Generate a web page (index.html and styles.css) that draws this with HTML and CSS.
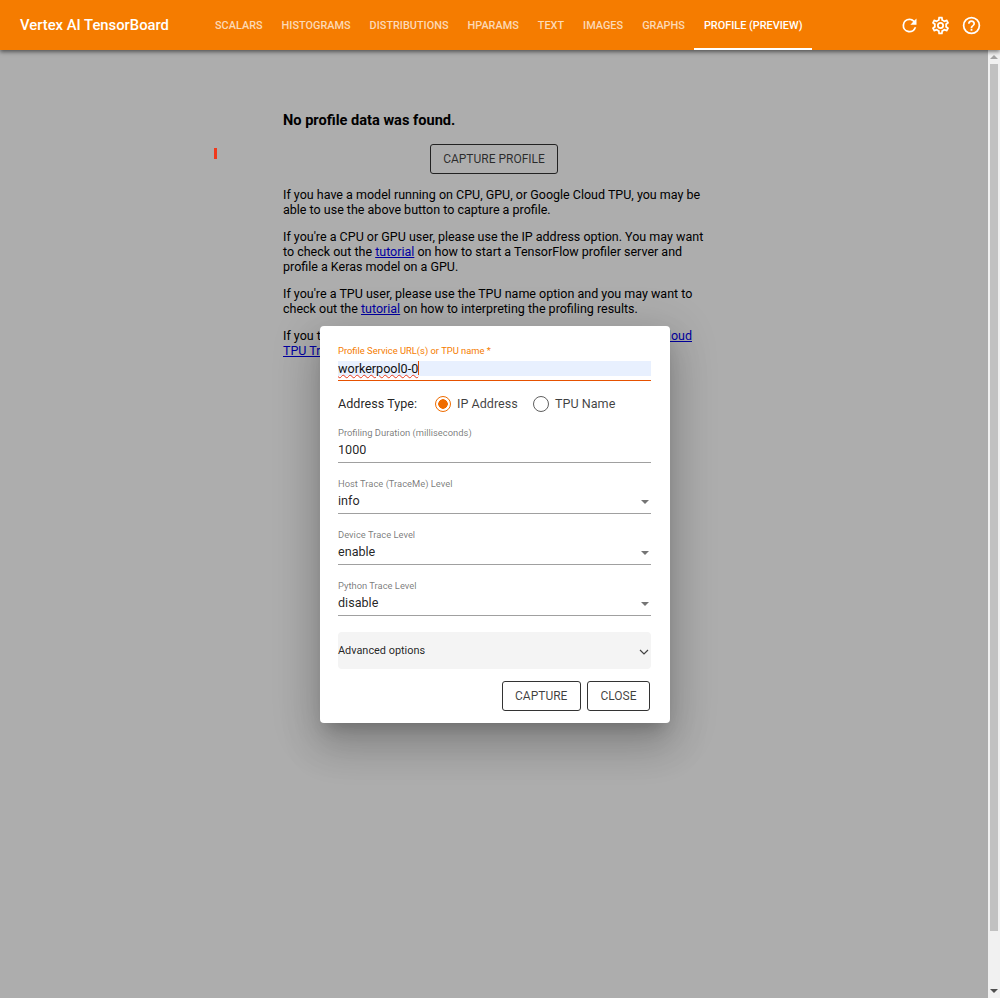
FILE: index.html
```html
<!DOCTYPE html>
<html lang="en">
<head>
  <meta charset="UTF-8" />
  <title>Vertex AI TensorBoard</title>
  <link rel="stylesheet" href="styles.css">
</head>
<body>

  <header class="toolbar">
    <div class="brand">Vertex AI TensorBoard</div>
    <nav class="tabs">
      <a class="tab">Scalars</a>
      <a class="tab">Histograms</a>
      <a class="tab">Distributions</a>
      <a class="tab">Hparams</a>
      <a class="tab">Text</a>
      <a class="tab">Images</a>
      <a class="tab">Graphs</a>
      <a class="tab active">Profile (Preview)</a>
    </nav>
    <div class="toolbar-icons">
      <svg class="icon" viewBox="0 0 24 24"><path d="M17.65 6.35A7.96 7.96 0 0 0 12 4a8 8 0 1 0 7.73 10h-2.08A6 6 0 1 1 12 6c1.66 0 3.14.69 4.22 1.78L13 11h7V4l-2.35 2.35z"/></svg>
      <svg class="icon" viewBox="0 0 24 24"><path d="M19.43 12.98c.04-.32.07-.64.07-.98s-.03-.66-.07-.98l2.11-1.65a.5.5 0 0 0 .12-.64l-2-3.46a.5.5 0 0 0-.61-.22l-2.49 1a7.3 7.3 0 0 0-1.69-.98l-.38-2.65A.49.49 0 0 0 14 2h-4a.49.49 0 0 0-.49.42l-.38 2.65c-.61.25-1.17.59-1.69.98l-2.49-1a.5.5 0 0 0-.61.22l-2 3.46a.49.49 0 0 0 .12.64l2.11 1.65c-.04.32-.07.65-.07.98s.03.66.07.98l-2.11 1.65a.5.5 0 0 0-.12.64l2 3.46c.12.22.39.3.61.22l2.49-1c.52.4 1.08.73 1.69.98l.38 2.65c.03.24.24.42.49.42h4c.25 0 .46-.18.49-.42l.38-2.65c.61-.25 1.17-.59 1.69-.98l2.49 1c.23.09.49 0 .61-.22l2-3.46a.5.5 0 0 0-.12-.64l-2.11-1.65zm-1.98-1.71c.04.31.05.52.05.73s-.02.43-.05.73l-.14 1.13.89.7 1.08.84-.7 1.21-1.27-.51-1.04-.42-.9.68c-.43.32-.84.56-1.25.73l-1.06.43-.16 1.13-.2 1.35h-1.4l-.19-1.35-.16-1.13-1.06-.43c-.43-.18-.83-.41-1.23-.71l-.91-.7-1.06.43-1.27.51-.7-1.21 1.08-.84.89-.7-.14-1.13c-.03-.31-.05-.54-.05-.74s.02-.43.05-.73l.14-1.13-.89-.7-1.08-.84.7-1.21 1.27.51 1.04.42.9-.68c.43-.32.84-.56 1.25-.73l1.06-.43.16-1.13.2-1.35h1.39l.19 1.35.16 1.13 1.06.43c.43.18.83.41 1.23.71l.91.7 1.06-.43 1.27-.51.7 1.21-1.07.85-.89.7.14 1.13zM12 8a4 4 0 1 0 0 8 4 4 0 0 0 0-8zm0 6a2 2 0 1 1 0-4 2 2 0 0 1 0 4z"/></svg>
      <svg class="icon" viewBox="0 0 24 24"><path d="M11 18h2v-2h-2v2zm1-16a10 10 0 1 0 0 20 10 10 0 0 0 0-20zm0 18a8 8 0 1 1 0-16 8 8 0 0 1 0 16zm0-14a4 4 0 0 0-4 4h2c0-1.1.9-2 2-2s2 .9 2 2c0 2-3 1.75-3 5h2c0-2.25 3-2.5 3-5a4 4 0 0 0-4-4z"/></svg>
    </div>
  </header>

  <div class="page">
    <main class="content">
      <div class="empty">
        <h3>No profile data was found.</h3>
        <div class="capture-row"><button class="outline-btn">Capture Profile</button></div>
        <p>If you have a model running on CPU, GPU, or Google Cloud TPU, you may be able to use the above button to capture a profile.</p>
        <p>If you're a CPU or GPU user, please use the IP address option. You may want to check out the <a href="#">tutorial</a> on how to start a TensorFlow profiler server and profile a Keras model on a GPU.</p>
        <p>If you're a TPU user, please use the TPU name option and you may want to check out the <a href="#">tutorial</a> on how to interpreting the profiling results.</p>
        <p>If you think profiling is done properly, please see the page of <a href="#">Google Cloud TPU Troubleshooting and FAQ</a> and consider filing an issue on GitHub.</p>
      </div>
      <div class="backdrop"></div>
      <div class="red-mark"></div>
    </main>
    <div class="scrollbar">
      <span class="arrow up"></span>
      <div class="thumb"></div>
      <span class="arrow down"></span>
    </div>
  </div>

  <div class="dialog">
    <div class="field focused">
      <label>Profile Service URL(s) or TPU name *</label>
      <div class="value autofill"><span class="misspelled">workerpool0-0</span><span class="caret"></span></div>
    </div>

    <div class="address-row">
      <span class="address-label">Address Type:</span>
      <span class="radio checked"></span><span class="radio-text">IP Address</span>
      <span class="radio"></span><span class="radio-text">TPU Name</span>
    </div>

    <div class="field">
      <label>Profiling Duration (milliseconds)</label>
      <div class="value">1000</div>
    </div>
    <div class="field select">
      <label>Host Trace (TraceMe) Level</label>
      <div class="value">info<span class="select-arrow"></span></div>
    </div>
    <div class="field select">
      <label>Device Trace Level</label>
      <div class="value">enable<span class="select-arrow"></span></div>
    </div>
    <div class="field select">
      <label>Python Trace Level</label>
      <div class="value">disable<span class="select-arrow"></span></div>
    </div>

    <div class="advanced">
      <span>Advanced options</span>
      <svg class="chevron" viewBox="0 0 10 6"><path d="M1 1l4 4 4-4"/></svg>
    </div>

    <div class="actions">
      <button class="outline-btn">Capture</button>
      <button class="outline-btn">Close</button>
    </div>
  </div>

</body>
</html>
```

FILE: styles.css
```css
* {
  box-sizing: border-box;
  margin: 0;
  padding: 0;
}

html, body {
  height: 100%;
  overflow: hidden;
}

body {
  font-family: Roboto, sans-serif;
  background-color: white;
  color: #000;
  display: flex;
  flex-direction: column;
}

.toolbar {
  height: 50px;
  flex: none;
  display: flex;
  align-items: center;
  padding-left: 20px;
  background-color: #f57c00;
  color: white;
  box-shadow: 0 2px 4px rgba(0, 0, 0, 0.5);
  position: relative;
  z-index: 3;
}

.brand {
  font-size: 14.8px;
  font-weight: 500;
  width: 185.5px;
  flex: none;
}

.tabs {
  display: flex;
  height: 100%;
}

.tab {
  display: flex;
  align-items: center;
  padding: 2px 9.5px 0;
  font-size: 10.9px;
  font-weight: 500;
  text-transform: uppercase;
  color: rgba(255, 255, 255, 0.72);
  border-bottom: 2px solid transparent;
}

.tab.active {
  color: white;
  border-bottom-color: white;
}

.toolbar-icons {
  margin-left: auto;
  display: flex;
  gap: 10px;
  padding-right: 18px;
}

.icon {
  width: 21px;
  height: 21px;
  fill: white;
}

.page {
  flex: 1;
  display: flex;
  min-height: 0;
}

.content {
  flex: 1;
  position: relative;
  padding: 61px 0 0 283px;
}

.empty {
  width: 427px;
  font-size: 12.5px;
  line-height: 15px;
}

.empty h3 {
  font-size: 14.6px;
  line-height: 19px;
  font-weight: 700;
}

.capture-row {
  display: flex;
  justify-content: center;
  margin: 14px 0 13px;
  padding-right: 5px;
}

.empty p {
  margin-bottom: 12px;
}

.empty a {
  color: #0000ee;
}

.outline-btn {
  height: 30px;
  padding: 0 12.5px;
  font-family: Roboto, sans-serif;
  font-size: 12px;
  text-transform: uppercase;
  color: rgba(0, 0, 0, 0.75);
  background: white;
  border: 1px solid #333;
  border-radius: 3px;
}

.scrollbar {
  width: 12px;
  flex: none;
  background-color: #f1f1f1;
  display: flex;
  flex-direction: column;
  align-items: center;
  padding: 5px 2px;
}

.thumb {
  width: 100%;
  height: 867px;
  margin-top: 5px;
  background-color: #c1c1c1;
}

.arrow {
  width: 0;
  height: 0;
  border-left: 4px solid transparent;
  border-right: 4px solid transparent;
}

.arrow.up {
  border-bottom: 4px solid #a3a3a3;
}

.arrow.down {
  margin-top: auto;
  border-top: 4px solid #505050;
}

.backdrop {
  position: absolute;
  inset: 0;
  background-color: rgba(0, 0, 0, 0.32);
  pointer-events: none;
}

.red-mark {
  position: absolute;
  left: 214px;
  top: 98px;
  width: 3px;
  height: 11px;
  background-color: #f0391c;
}

.dialog {
  position: absolute;
  left: 320px;
  top: 326px;
  width: 350px;
  height: 397px;
  z-index: 4;
  padding: 17px 19px 0 18px;
  background-color: white;
  border-radius: 4px;
  box-shadow: 0 11px 15px -7px rgba(0, 0, 0, 0.2), 0 24px 38px 3px rgba(0, 0, 0, 0.14), 0 9px 46px 8px rgba(0, 0, 0, 0.12);
}

.field {
  height: 51px;
}

.field label {
  display: block;
  height: 15px;
  font-size: 9.4px;
  line-height: 15px;
  color: rgba(0, 0, 0, 0.54);
}

.value {
  position: relative;
  height: 20px;
  font-size: 12.6px;
  line-height: 20px;
  border-bottom: 1px solid #a0a0a0;
  box-sizing: content-box;
  padding-bottom: 2px;
  color: rgba(0, 0, 0, 0.87);
}

.field.focused {
  height: 37px;
}

.field.focused label {
  color: #f57c00;
}

.value.autofill {
  height: 15px;
  line-height: 14px;
  margin-top: 3px;
  padding: 0 0 4px;
  background: linear-gradient(#e8f0fe, #e8f0fe) top / 100% 15px no-repeat;
  border-bottom: 1.5px solid #e65100;
  color: #111;
}

.misspelled {
  text-decoration: underline wavy #e8391c 1px;
  text-underline-offset: 1px;
}

.caret {
  display: inline-block;
  width: 1px;
  height: 14px;
  vertical-align: -2px;
  background-color: #e65100;
}

.address-row {
  display: flex;
  align-items: center;
  height: 42.5px;
  font-size: 12.6px;
  padding-top: 5px;
  margin-bottom: 2px;
  color: rgba(0, 0, 0, 0.87);
}

.address-label {
  width: 97px;
}

.radio {
  width: 16px;
  height: 16px;
  border: 1.5px solid #5f5f5f;
  border-radius: 50%;
  margin-right: 6px;
  flex: none;
}

.radio.checked {
  border-color: #ef6c00;
  background: radial-gradient(circle, #ef6c00 0 4.5px, white 5px);
}

.radio-text {
  width: 76px;
  color: rgba(0, 0, 0, 0.75);
}

.select-arrow {
  position: absolute;
  right: 2px;
  top: 9px;
  width: 0;
  height: 0;
  border-left: 4.5px solid transparent;
  border-right: 4.5px solid transparent;
  border-top: 4.5px solid rgba(0, 0, 0, 0.54);
}

.advanced {
  display: flex;
  align-items: center;
  justify-content: space-between;
  height: 37px;
  margin-top: 3px;
  padding-right: 2px;
  background-color: #f4f4f4;
  border-radius: 4px;
  font-size: 10.9px;
  color: rgba(0, 0, 0, 0.87);
}

.chevron {
  width: 10px;
  height: 6px;
  margin-top: 4px;
  fill: none;
  stroke: #444;
  stroke-width: 1.2;
}

.actions {
  display: flex;
  justify-content: flex-end;
  gap: 6px;
  margin-top: 12px;
  padding-right: 1px;
}
```
